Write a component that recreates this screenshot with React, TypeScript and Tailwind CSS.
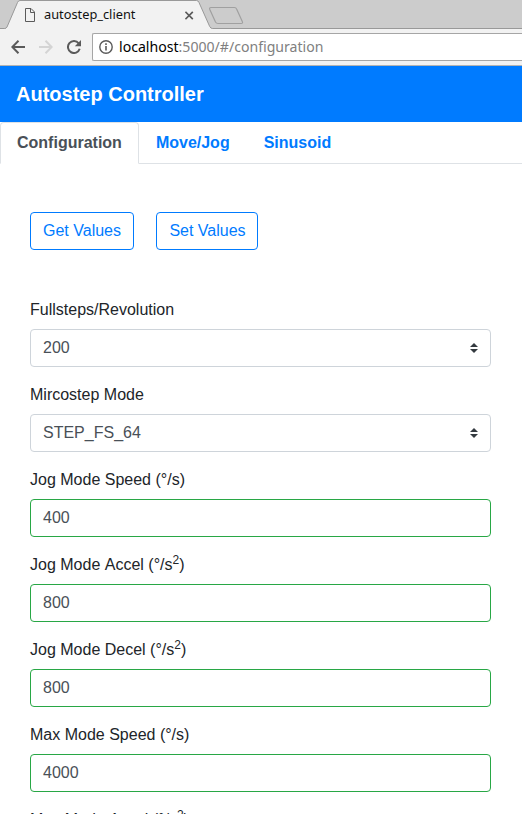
import React from "react";

function TabStrip() {
  return (
    <div className="relative h-[29px] bg-[#cccccc] font-['Noto_Sans',sans-serif]">
      <svg className="absolute inset-0" width="522" height="29" viewBox="0 0 522 29" fill="none">
        <path d="M0 28.5H522" stroke="#999999" />
        <path
          d="M0 28.5H4.5Q6.300 28.500 7 27L17.500 2.500Q18.300 .5 20 .5H196.500Q198.200 .5 199 2.500L209.700 26.500Q210.700 28.500 212.500 28.500V29H0Z"
          fill="#f2f2f2"
        />
        <path
          d="M0 28.5H4.5Q6.300 28.500 7 27L17.500 2.500Q18.300 .5 20 .5H196.500Q198.200 .5 199 2.500L209.700 26.500Q210.700 28.500 212.500 28.500"
          stroke="#999999"
        />
        <path
          d="M211 7.500H234.500Q236 7.500 236.600 9L242.300 21.500Q243.200 23.500 241 23.500H218Q216.300 23.500 215.500 22L209.800 9.500Q209 7.500 211 7.500Z"
          stroke="#a0a0a0"
          strokeWidth="1.2"
        />
      </svg>
      <div className="relative flex h-full items-center pl-[25px]">
        <svg width="10" height="14" viewBox="0 0 10 14" fill="none" stroke="#5a5a5a" className="mt-px">
          <path d="M.5 .5H6L9.500 4V13.500H.5ZM5.500 .5V4.500H9.500" />
        </svg>
        <span className="mb-px ml-[9px] w-[141px] text-[12.800px] leading-[28px] text-[#111111]">autostep_client</span>
        <svg width="9" height="9" viewBox="0 0 9 9" fill="none" stroke="#5a5a5a" strokeWidth="1.7" className="mt-px">
          <path d="M.4 .8L7.800 8.200M7.800 .8L.4 8.200" />
        </svg>
      </div>
    </div>
  );
}

function Toolbar() {
  return (
    <div className="flex h-[37px] items-start border-b border-[#b3b3b3] bg-[#f2f2f2] pt-1 pl-[11px] font-['Noto_Sans',sans-serif]">
      <div className="flex h-7 w-[81px] shrink-0 items-center gap-[14px]">
        <svg width="14" height="14" viewBox="0 0 14 14" fill="none" stroke="#5a5a5a" strokeWidth="2">
          <path d="M14 7H1.500M7.500 .8L1.300 7L7.500 13.200" />
        </svg>
        <svg width="14" height="14" viewBox="0 0 14 14" fill="none" stroke="#d4d4d4" strokeWidth="2">
          <path d="M0 7H12.500M6.500 .8L12.700 7L6.500 13.200" />
        </svg>
        <svg width="14" height="14" viewBox="0 0 14 14" fill="none">
          <path d="M11.700 3.300A6 6 0 1 0 12.700 8.800" stroke="#5a5a5a" strokeWidth="2" />
          <path d="M14 0V6.200H7.800Z" fill="#5a5a5a" />
        </svg>
      </div>
      <div className="flex h-7 flex-1 items-center rounded-l-[2px] border border-r-0 border-[#a6a6a6] bg-white pl-[6px]">
        <svg width="14" height="14" viewBox="0 0 14 14" fill="none">
          <circle cx="7" cy="7" r="6.200" stroke="#5a5a5a" strokeWidth="1.400" />
          <path d="M7 6V10.500M7 3.300V4.900" stroke="#5a5a5a" strokeWidth="1.600" />
        </svg>
        <span className="ml-[6px] text-[14.100px] leading-[26px] text-[#808080]">
          <span className="text-black">localhost</span>:5000/#/configuration
        </span>
      </div>
    </div>
  );
}

function SortArrows() {
  return (
    <svg width="8" height="10" viewBox="0 0 8 10" fill="#343a40">
      <path d="M4 0L0 4.100h8zM4 10L0 5.900h8z" />
    </svg>
  );
}

type FieldProps = { label: string; unit?: string; value: string; squared?: boolean; select?: boolean };

function Field({ label, unit, value, squared, select }: FieldProps) {
  return (
    <div className="mb-4">
      <div className="mb-[7px] h-6 leading-6 text-[#212529]">
        {label.split(" ").map((word) => (
          <React.Fragment key={word}>
            <span className="inline-block">{word}</span>{" "}
          </React.Fragment>
        ))}
        {unit && (
          <span>
            ({unit}
            {squared && <sup className="relative -top-[0.5em] align-baseline text-[12px] leading-none">2</sup>})
          </span>
        )}
      </div>
      <div
        className={
          select
            ? "flex h-[38px] items-center justify-between rounded border border-[#ced4da] bg-white px-3 text-[#495057]"
            : "flex h-[38px] items-center rounded border border-[#28a745] bg-white px-3 text-[#495057]"
        }
      >
        <span>{value}</span>
        {select && <SortArrows />}
      </div>
    </div>
  );
}

const fields: FieldProps[] = [
  { label: "Fullsteps/Revolution", value: "200", select: true },
  { label: "Mircostep Mode", value: "STEP_FS_64", select: true },
  { label: "Jog Mode Speed", unit: "°/s", value: "400" },
  { label: "Jog Mode Accel", unit: "°/s", value: "800", squared: true },
  { label: "Jog Mode Decel", unit: "°/s", value: "800", squared: true },
  { label: "Max Mode Speed", unit: "°/s", value: "4000" },
  { label: "Max Mode Accel", unit: "°/s", value: "8000", squared: true },
];

export default function App() {
  return (
    <div className="h-[814px] w-[522px] overflow-hidden bg-white font-['Liberation_Sans',Arial,sans-serif] text-base leading-6">
      <TabStrip />
      <Toolbar />
      <header className="flex h-14 items-center bg-[#007bff] px-4 text-xl font-bold text-white">
        Autostep Controller
      </header>
      <nav className="flex h-[42px] border-b border-[#dee2e6] font-bold text-[#007bff]">
        <div className="-mb-px rounded-t border border-[#dee2e6] border-b-white bg-white px-4 py-2 text-[#495057]">
          Configuration
        </div>
        <div className="border border-transparent px-4 py-2">Move/Jog</div>
        <div className="border border-transparent px-4 py-2">Sinusoid</div>
      </nav>
      <main className="px-[30px] pt-12">
        <div className="mb-12 flex gap-[22px]">
          <button className="h-[38px] w-[104px] rounded border border-[#007bff] text-[#007bff]">Get Values</button>
          <button className="h-[38px] w-[102px] rounded border border-[#007bff] pl-px text-[#007bff]">Set Values</button>
        </div>
        <div className="w-[461px]">
          {fields.map((field) => (
            <Field key={field.label} {...field} />
          ))}
        </div>
      </main>
    </div>
  );
}
